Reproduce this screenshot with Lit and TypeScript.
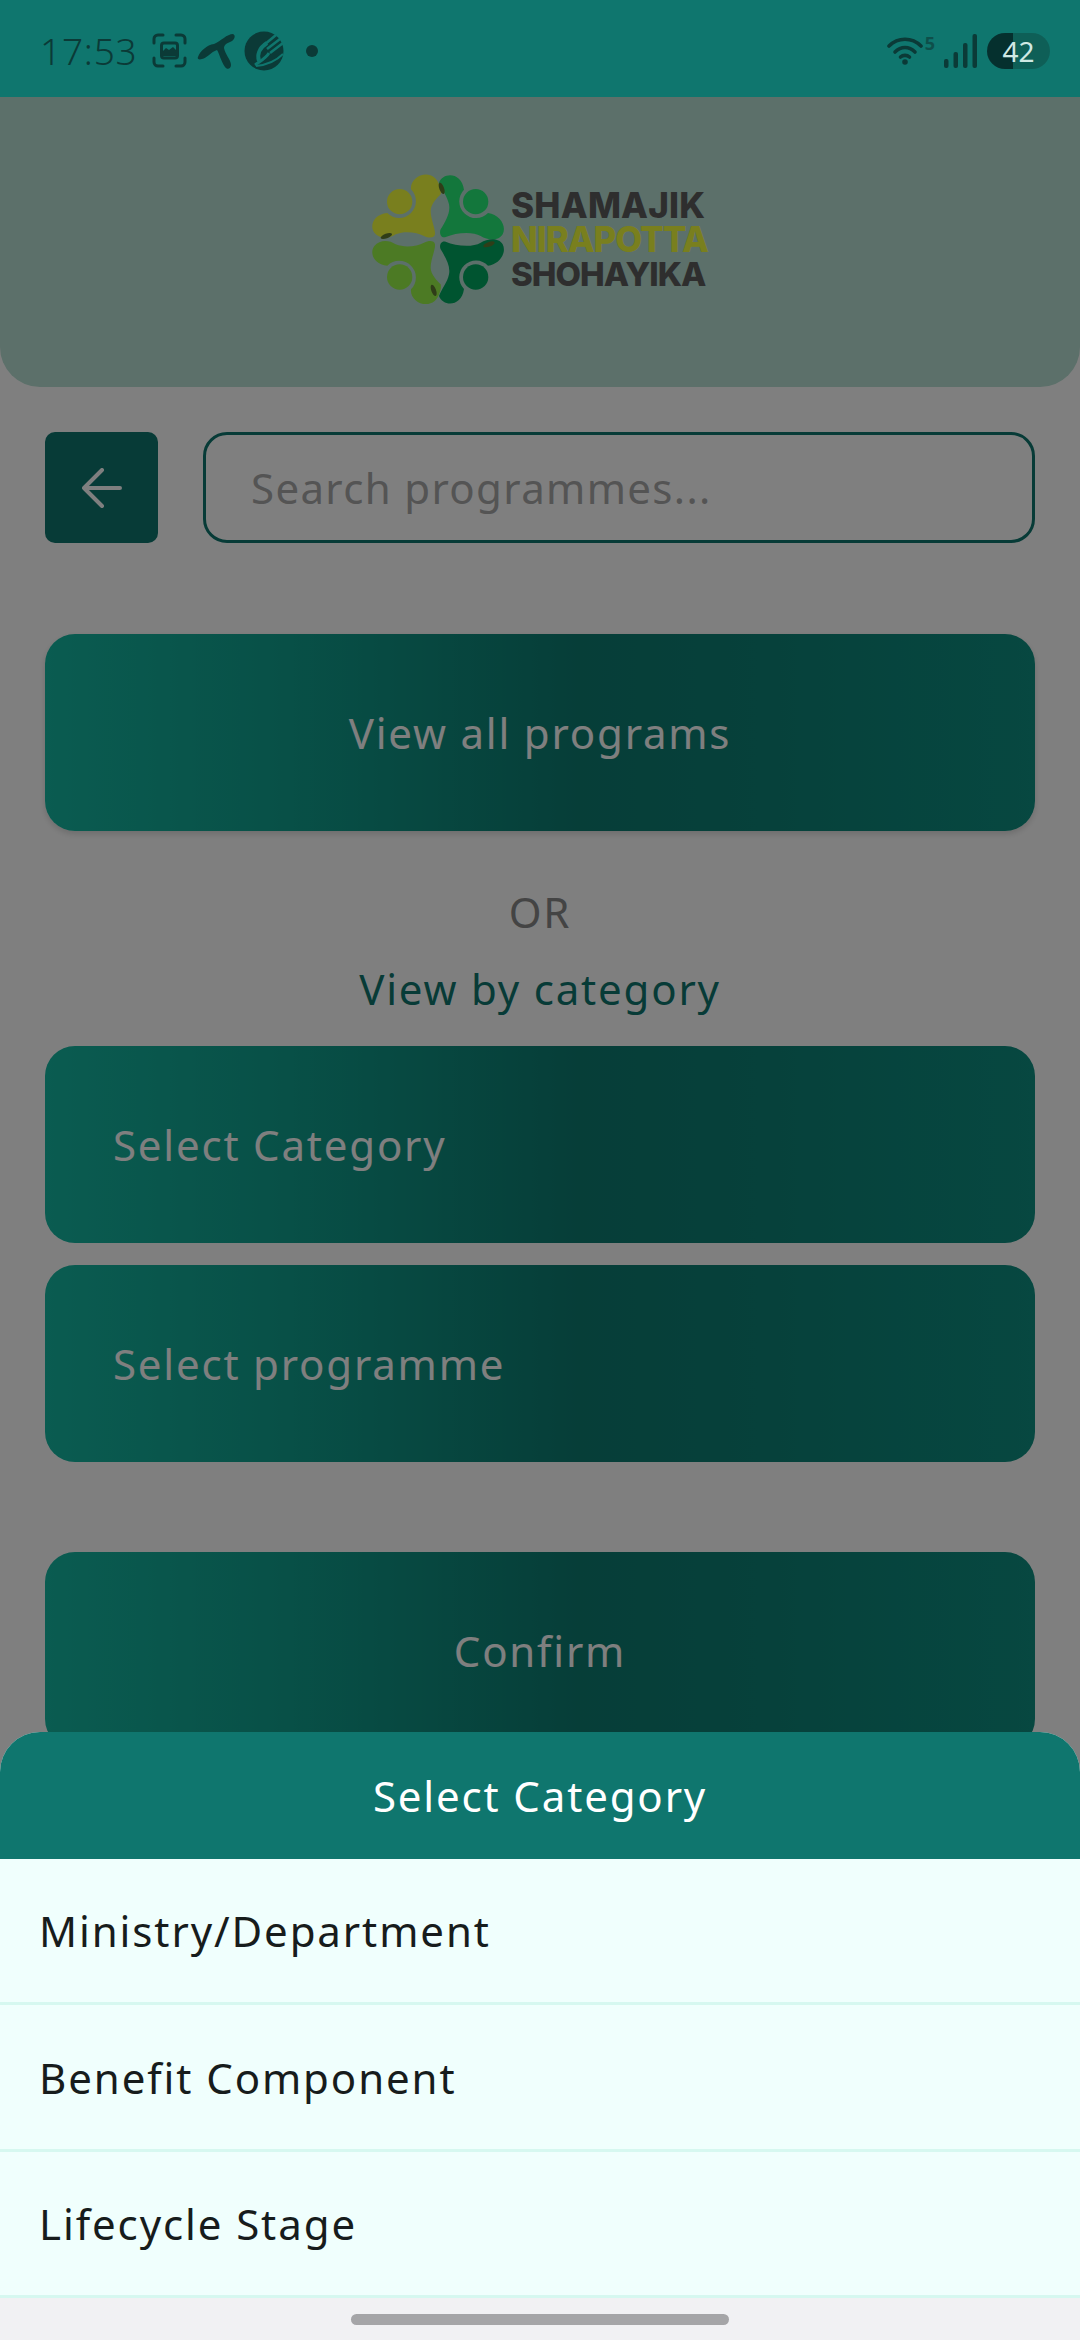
import { LitElement, html, css, svg } from "lit";
import { customElement } from "lit/decorators.js";

const leftBody = svg`<path d="M216 115C212 82 258 56 287 80C302 94 308 120 305 130C295 140 275 160 275 180C275 205 290 235 288 250C286 262 270 262 255 255C235 245 200 238 170 250C150 264 122 264 106 245C91 225 103 190 145 186A50 50 0 1 0 216 115Z"/>`;
const rightBody = svg`<path d="M300 95C312 62 368 62 375 116A50 50 0 1 0 447 186C482 190 504 225 491 250C478 272 445 267 425 255C400 240 350 245 320 258C305 262 300 245 305 235C320 210 335 185 330 160C325 135 310 120 300 95Z"/>`;

@customElement("app-root")
export class AppRoot extends LitElement {
  static styles = css`
    :host {
      display: block;
      position: relative;
      width: 1080px;
      height: 2340px;
      overflow: hidden;
      background: #fff;
      font-family: "Noto Sans", "Open Sans", sans-serif;
      font-weight: 400;
    }
    .status {
      position: relative;
      z-index: 3;
      height: 97px;
      background: #0f766e;
      display: flex;
      align-items: center;
      justify-content: space-between;
      padding: 4px 30px 0 40px;
      box-sizing: border-box;
      color: #0b3a37;
    }
    .group { display: flex; align-items: center; }
    .time { font-size: 37px; font-weight: 350; letter-spacing: 0.8px; margin-right: 14px; line-height: 40px; }
    .status svg { display: block; }
    .ic-shot { margin-right: 10px; }
    .ic-tel { margin-right: 9px; }
    .ic-fork { margin-right: 22px; }
    .five { font-size: 18px; font-weight: 700; align-self: flex-start; margin: 0 9px 0 2px; line-height: 20px; color: #0e4f4a; }
    .ic-sig { margin-right: 10px; }
    .battery {
      width: 63px;
      height: 36px;
      border-radius: 18px;
      background: linear-gradient(90deg, #05302e 0 26px, #0e5f57 26px);
      color: #cfe9e4;
      font-size: 28px;
      line-height: 36px;
      text-align: center;
      font-weight: 400;
    }
    .header {
      height: 290px;
      background: #b8e0d4;
      border-radius: 0 0 40px 40px;
      display: flex;
      align-items: center;
      justify-content: center;
    }
    .logo { display: flex; align-items: center; gap: 5px; margin: -5px 3px 0 0; }
    .logo-words {
      display: flex;
      flex-direction: column;
      font-family: Inter, "Liberation Sans", sans-serif;
      font-weight: 800;
      font-size: 35px;
      color: #5c5c5c;
    }
    .logo-words span { line-height: 36px; white-space: nowrap; }
    .logo-words .l1 { letter-spacing: 0.2px; }
    .logo-words .mid { color: #f2ff3c; line-height: 33px; letter-spacing: -1.1px; }
    .logo-words .l3 { font-size: 33px; letter-spacing: -1px; }
    .content { padding: 45px 45px 0; }
    .search-row { display: flex; gap: 45px; }
    .back {
      width: 113px;
      height: 111px;
      flex: none;
      background: #0f766e;
      border-radius: 10px;
      display: flex;
      align-items: center;
      justify-content: center;
    }
    .search {
      flex: 1;
      height: 111px;
      box-sizing: border-box;
      border: 3px solid #0f766e;
      border-radius: 24px;
      padding-left: 45px;
      display: flex;
      align-items: center;
      font-size: 42px;
      letter-spacing: 1.35px;
      color: #a8a8a8;
    }
    .btn {
      height: 197px;
      border-radius: 30px;
      background: linear-gradient(90deg, #15b8a2 0%, #10a08e 25%, #0c7c71 54%, #0c8276 72%, #0e9082 100%);
      color: #fff;
      font-size: 42px;
      letter-spacing: 1.8px;
      display: flex;
      align-items: center;
    }
    .center { justify-content: center; }
    .left { padding-left: 68px; }
    .all { margin-top: 91px; box-shadow: 0 3px 6px rgba(0, 0, 0, 0.15); }
    .or { margin-top: 50px; line-height: 62px; text-align: center; font-size: 42px; letter-spacing: 1.8px; color: #888; }
    .cat { margin: 15px 0 26px; line-height: 62px; text-align: center; font-size: 42px; letter-spacing: 1.8px; color: #0f766e; }
    .prog { margin-top: 22px; }
    .confirm { margin-top: 90px; }
    .scrim {
      position: absolute;
      inset: 97px 0 0 0;
      background: rgba(0, 0, 0, 0.5);
      z-index: 1;
    }
    .sheet {
      position: absolute;
      left: 0;
      right: 0;
      top: 1732px;
      bottom: 0;
      z-index: 2;
      display: flex;
      flex-direction: column;
      background: #f1f1f3;
      border-radius: 40px 40px 0 0;
      overflow: hidden;
    }
    .sheet-title {
      height: 127px;
      flex: none;
      background: #0f766e;
      color: #fff;
      font-size: 42px;
      letter-spacing: 1.85px;
      display: flex;
      align-items: center;
      justify-content: center;
    }
    .row {
      height: 146.4px;
      box-sizing: border-box;
      flex: none;
      background: #f0fffd;
      border-bottom: 3px solid #d6f8f0;
      padding-left: 39px;
      display: flex;
      align-items: center;
      font-size: 42px;
      letter-spacing: 1.9px;
      color: #171c1c;
    }
    .nav { flex: 1; display: flex; justify-content: center; padding-top: 16px; }
    .handle { width: 378px; height: 11px; border-radius: 6px; background: #a5a5a7; }
  `;

  private statusBar() {
    return html`<div class="status">
      <div class="group">
        <span class="time">17:53</span>
        <svg class="ic-shot" width="35" height="35" viewBox="0 0 35 35" fill="none" stroke="#0b3a37" stroke-width="3" stroke-linecap="round">
          <path d="M2 10V6a4 4 0 0 1 4-4h5M24 2h5a4 4 0 0 1 4 4v4M33 25v4a4 4 0 0 1-4 4h-5M11 33H6a4 4 0 0 1-4-4v-4"/>
          <rect x="9.5" y="10" width="16" height="15" rx="2.5"/>
          <path d="M10 19l4-4 3 2 4-3 4 4v5H10z" fill="#0b3a37" stroke="none"/>
        </svg>
        <svg class="ic-tel" width="38" height="36" viewBox="0 0 38 36" fill="#0b3a37">
          <path d="M1 24C3 18 10 12 17 11C24 8 30 1 36 1C39 2 38 7 33 9C30 10 27 12 27 15C28 21 34 27 34 32C34 36 30 37 28 34C24 28 22 20 20 17C14 19 10 25 5 26C2 27 0 26 1 24Z"/>
        </svg>
        <svg class="ic-fork" width="40" height="40" viewBox="0 0 40 40">
          <circle cx="20" cy="20" r="19.5" fill="#0b3a37"/>
          <path d="M20 14L32 4M23 18L36 8M26 22L39 12" stroke="#0f766e" stroke-width="2.6" fill="none"/>
          <path d="M23 12C15 17 13 24 15 30" stroke="#0f766e" stroke-width="4" fill="none"/>
          <path d="M25 22C22 27 18 29 11 34" stroke="#0f766e" stroke-width="3" fill="none"/>
          <path d="M12 35C22 34 32 30 39 23" stroke="#0f766e" stroke-width="2" fill="none"/>
        </svg>
        <svg width="12" height="12" viewBox="0 0 12 12"><circle cx="6" cy="6" r="6" fill="#0b3a37"/></svg>
      </div>
      <div class="group">
        <svg width="36" height="29" viewBox="0 0 36 29" fill="none" stroke="#0b3a37" stroke-width="3.6" stroke-linecap="round">
          <path d="M2 10C11 1 25 1 34 10"/>
          <path d="M8 16C14 10 22 10 28 16"/>
          <path d="M13.5 21C16 18.8 20 18.8 22.5 21"/>
          <circle cx="18" cy="26" r="1.6" fill="#0b3a37" stroke-width="2.4"/>
        </svg>
        <span class="five">5</span>
        <svg class="ic-sig" width="33" height="34" viewBox="0 0 33 34" fill="#0b3a37">
          <rect x="0" y="25" width="4.5" height="9" rx="2"/>
          <rect x="9.5" y="18" width="4.5" height="16" rx="2"/>
          <rect x="19" y="9" width="4.5" height="25" rx="2"/>
          <rect x="28.5" y="0" width="4.5" height="34" rx="2"/>
        </svg>
        <div class="battery">42</div>
      </div>
    </div>`;
  }

  private logo() {
    return html`<div class="logo">
      <svg width="137" height="137" viewBox="90 60 411 411">
        <g fill="#f2ff3c">
          <circle cx="182" cy="152" r="38"/>
          ${leftBody}
        </g>
        <g fill="#26ee78">
          <circle cx="410" cy="152" r="38"/>
          ${rightBody}
        </g>
        <g fill="#98f448" transform="matrix(1 0 0 -1 0 530)">
          <circle cx="182" cy="152" r="38"/>
          ${leftBody}
        </g>
        <g fill="#00a860" transform="matrix(1 0 0 -1 0 530)">
          <circle cx="410" cy="152" r="38"/>
          ${rightBody}
        </g>
        <g fill="#5f7a30">
          <ellipse cx="308" cy="112" rx="7" ry="18" transform="rotate(-20 308 112)"/>
          <ellipse cx="142" cy="255" rx="18" ry="7" transform="rotate(-20 142 255)"/>
          <ellipse cx="450" cy="280" rx="18" ry="7" transform="rotate(-20 450 280)"/>
          <ellipse cx="284" cy="418" rx="7" ry="18" transform="rotate(-20 284 418)"/>
        </g>
      </svg>
      <div class="logo-words">
        <span class="l1">SHAMAJIK</span>
        <span class="mid">NIRAPOTTA</span>
        <span class="l3">SHOHAYIKA</span>
      </div>
    </div>`;
  }

  render() {
    return html`
      ${this.statusBar()}
      <div class="header">${this.logo()}</div>
      <div class="content">
        <div class="search-row">
          <div class="back">
            <svg width="40" height="40" viewBox="0 0 40 40" fill="none" stroke="#fff" stroke-width="4" stroke-linecap="round" stroke-linejoin="round">
              <path d="M38 20H2M20 2L2 20L20 38"/>
            </svg>
          </div>
          <div class="search">Search programmes...</div>
        </div>
        <div class="btn center all">View all programs</div>
        <div class="or">OR</div>
        <div class="cat">View by category</div>
        <div class="btn left">Select Category</div>
        <div class="btn left prog">Select programme</div>
        <div class="btn center confirm">Confirm</div>
      </div>
      <div class="scrim"></div>
      <div class="sheet">
        <div class="sheet-title">Select Category</div>
        <div class="row">Ministry/Department</div>
        <div class="row">Benefit Component</div>
        <div class="row">Lifecycle Stage</div>
        <div class="nav"><div class="handle"></div></div>
      </div>
    `;
  }
}
